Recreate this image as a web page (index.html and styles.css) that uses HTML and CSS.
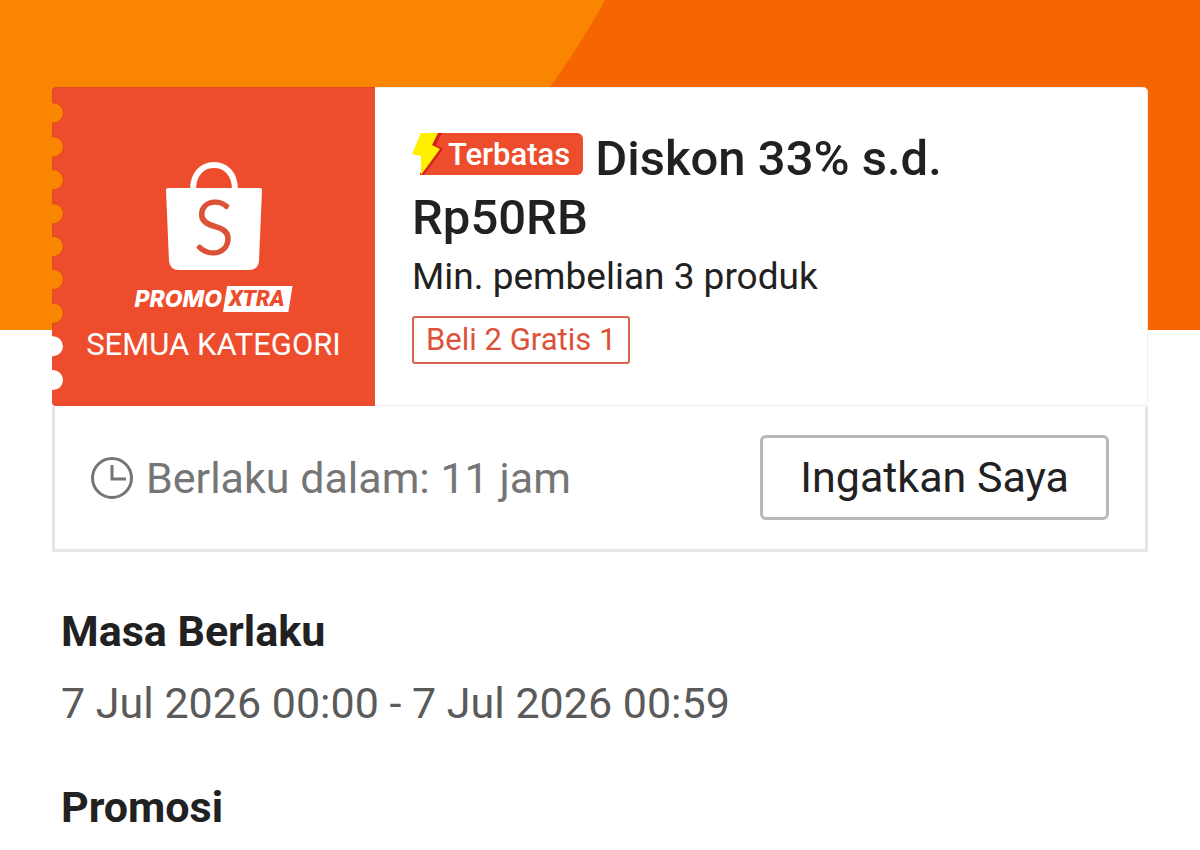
FILE: index.html
```html
<!DOCTYPE html>
<html lang="id">
<head>
	<meta charset="utf-8">
	<meta name="viewport" content="width=device-width, initial-scale=1">
	<title>Detail Voucher</title>
	<link rel="stylesheet" href="styles.css">
</head>
<body>

<div class="hero">
	<svg class="hero-art" viewBox="0 0 1200 330" preserveAspectRatio="none" aria-hidden="true">
		<path d="M605 0 Q580 46 550 87 Q470 200 370 330 H1200 V0 Z" fill="#f56600"/>
	</svg>
</div>

<main class="page">

	<!-- Voucher -->
	<article class="voucher">
		<div class="ticket">
			<div class="stub">
				<!-- red ticket edge with notches -->
				<svg class="stub-shape" viewBox="0 0 323 320" preserveAspectRatio="none" aria-hidden="true">
					<path fill="#ee4d2d" d="M323 0 H5 Q0 0 0 5 V16 h1 a10 10 0 0 1 0 20 h-1 V50 h1 a10 10 0 0 1 0 20 h-1 V83 h1 a10 10 0 0 1 0 20 h-1 V117 h1 a10 10 0 0 1 0 20 h-1 V150 h1 a10 10 0 0 1 0 20 h-1 V183 h1 a10 10 0 0 1 0 20 h-1 V217 h1 a10 10 0 0 1 0 20 h-1 V250 h1 a10 10 0 0 1 0 20 h-1 V284 h1 a10 10 0 0 1 0 20 h-1 V316 Q0 320 4 320 H323 Z"/>
					<path fill="none" stroke="#d9480f" stroke-opacity=".6" d="M323 .5 H5 Q.5 .5 .5 5 V16 h1 a10 10 0 0 1 0 20 h-1 V50 h1 a10 10 0 0 1 0 20 h-1 V83 h1 a10 10 0 0 1 0 20 h-1 V117 h1 a10 10 0 0 1 0 20 h-1 V150 h1 a10 10 0 0 1 0 20 h-1 V183 h1 a10 10 0 0 1 0 20 h-1 V217 h1 a10 10 0 0 1 0 20 h-1 V243"/>
				</svg>
				<svg class="bag" viewBox="0 0 96 108" aria-hidden="true">
					<path d="M27 28 C27 12 36 3 48 3 C60 3 69 12 69 28" fill="none" stroke="#fff" stroke-width="6"/>
					<path d="M2 26 H94 Q96 26 96 28 L93 99 Q92 108 83 108 H13 Q4 108 3 99 L0 28 Q0 26 2 26 Z" fill="#fff"/>
					<text class="bag-letter" x="48" y="92" text-anchor="middle">S</text>
				</svg>
				<div class="promo"><span>PROMO</span><span class="xtra">XTRA</span></div>
				<div class="category">SEMUA KATEGORI</div>
			</div>

			<div class="info">
				<h1 class="title"><span class="badge"><svg class="bolt" viewBox="0 0 32 42" aria-hidden="true">
					<path d="M8 42 L24 0 H32 V42 Z" fill="#ee4d2d"/>
					<path d="M20 0 H30 L24 12 L31 16 L12 42 H8 Z" fill="#d8201c"/>
					<path d="M9 0 H26 L20 12 L28 16 L9 42 V23 L0 21 Z" fill="#fff000"/>
				</svg><span class="badge-text">Terbatas</span></span> Diskon 33% s.d.<br>Rp50RB</h1>
				<p class="minimum">Min. pembelian 3 produk</p>
				<span class="tag">Beli 2 Gratis 1</span>
			</div>
		</div>

		<div class="status">
			<svg class="clock" viewBox="0 0 42 42" aria-hidden="true">
				<circle cx="21" cy="21" r="19.5"/>
				<path d="M21 8 V22 H35"/>
			</svg>
			<span class="countdown">Berlaku dalam: 11 jam</span>
			<button type="button" class="remind">Ingatkan Saya</button>
		</div>
	</article>

	<!-- Details -->
	<section class="detail">
		<h2>Masa Berlaku</h2>
		<p>7 Jul 2026 00:00 - 7 Jul 2026 00:59</p>
	</section>
	<section class="detail">
		<h2>Promosi</h2>
	</section>

</main>

</body>
</html>
```
FILE: styles.css
```css
* {
  box-sizing: border-box;
}

body {
  margin: 0;
  background: #fff;
  color: #212121;
  font-family: Roboto, "Liberation Sans", sans-serif;
}

h1, h2, p {
  margin: 0;
}

.hero {
  height: 330px;
  background: #f98500;
}

.hero-art {
  display: block;
  width: 100%;
  height: 100%;
}

/* pull the voucher up over the hero */
.page {
  position: relative;
  margin-top: -243px;
  padding: 0 52px;
}

.ticket {
  display: flex;
  min-height: 319px;
}

.stub {
  position: relative;
  display: flex;
  flex-direction: column;
  align-items: center;
  flex: 0 0 323px;
  padding-top: 75px;
  color: #fff;
}

.stub-shape {
  position: absolute;
  top: 0;
  left: 0;
  width: 100%;
  height: 100%;
}

.bag,
.promo,
.category {
  position: relative;
}

.bag {
  width: 96px;
  height: 108px;
}

.bag-letter {
  font-family: Lato, sans-serif;
  font-size: 74px;
  font-weight: 300;
  fill: #dc5238;
  stroke: #dc5238;
  stroke-width: 2px;
}

.promo {
  display: flex;
  align-items: center;
  gap: 1px;
  margin-top: 16px;
  font-family: Inter, sans-serif;
  font-size: 23px;
  font-weight: 800;
  font-style: italic;
  line-height: 26px;
}

.xtra {
  padding: 0 8px 0 6px;
  background: #fff;
  color: #ee4d2d;
  font-family: Roboto, sans-serif;
  font-weight: 900;
  font-size: 22px;
  clip-path: polygon(6% 0, 100% 0, 94% 100%, 0 100%);
}

.category {
  margin-top: 13px;
  font-size: 31px;
  line-height: 40px;
}

.info {
  flex: 1;
  padding: 41px 37px 36px;
  background: #fff;
  border: 1px solid #eee;
  border-left: 0;
  border-radius: 0 5px 5px 0;
}

.title {
  font-size: 49px;
  font-weight: 500;
  line-height: 59px;
}

.badge {
  display: inline-flex;
  height: 42px;
}

.bolt {
  width: 32px;
  height: 42px;
}

.badge-text {
  padding: 0 13px 0 4px;
  background: #ee4d2d;
  border-radius: 0 6px 6px 0;
  color: #fff;
  font-size: 31px;
  line-height: 43px;
}

.minimum {
  font-size: 37px;
  line-height: 60px;
}

.tag {
  display: inline-block;
  margin-top: 9px;
  padding: 0 12px;
  border: 2px solid #d8654f;
  border-radius: 3px;
  color: #dc5238;
  font-size: 31px;
  line-height: 44px;
}

.status {
  display: flex;
  align-items: center;
  padding: 29px 36px;
  background: #fff;
  border: 3px solid #e6e6e6;
  border-top: 0;
}

.clock {
  width: 42px;
  height: 42px;
  fill: none;
  stroke: #757575;
  stroke-width: 3;
}

.countdown {
  margin-left: 13px;
  color: #757575;
  font-size: 43px;
}

.remind {
  margin-left: auto;
  padding: 0 37px;
  background: #fff;
  border: 3px solid #b8b8b8;
  border-radius: 6px;
  color: #212121;
  font-family: inherit;
  font-size: 43px;
  line-height: 79px;
}

.detail {
  padding: 49px 9px 0;
}

.detail + .detail {
  padding-top: 44px;
}

.detail h2 {
  font-size: 43px;
  font-weight: 700;
  line-height: 60px;
}

.detail p {
  margin-top: 12px;
  color: #5a5a5a;
  font-size: 43px;
  line-height: 60px;
}
```
